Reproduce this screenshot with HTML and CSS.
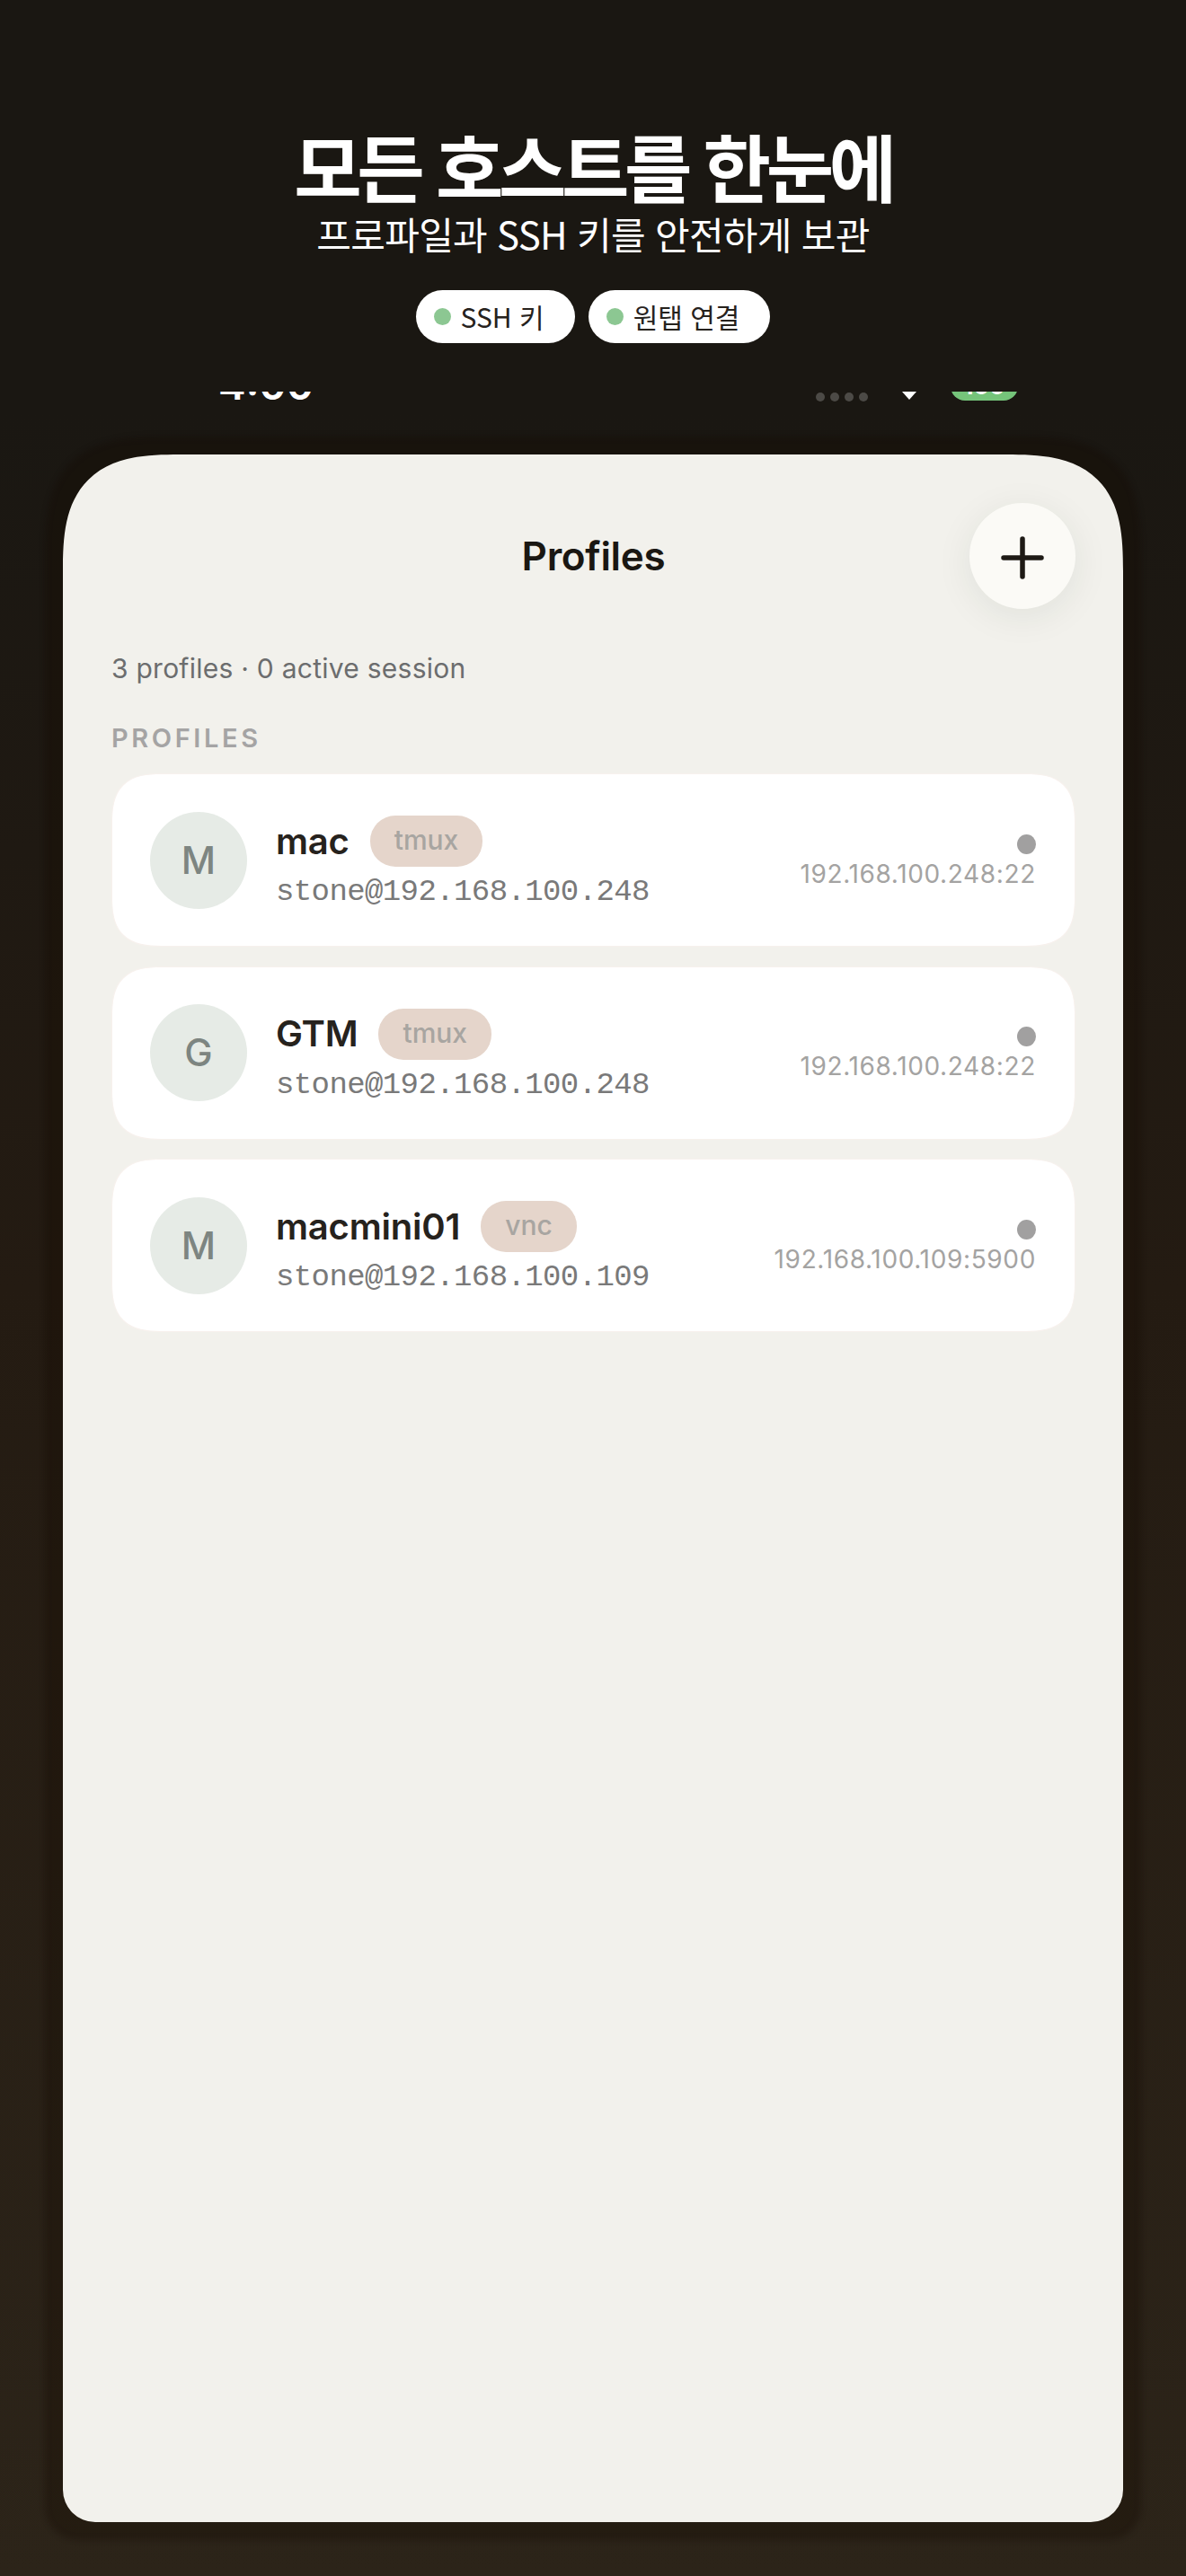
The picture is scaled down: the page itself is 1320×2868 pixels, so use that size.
FILE: index.html
```html
<!DOCTYPE html>
<html lang="ko">
<head>
<meta charset="utf-8">
<title>Profiles</title>
<link rel="stylesheet" href="styles.css">
</head>
<body>
<div class="stage">
  <header class="hero">
    <h1 class="hero-title">모든 호스트를 한눈에</h1>
    <p class="hero-sub">프로파일과 SSH 키를 안전하게 보관</p>
    <div class="chips">
      <span class="chip"><i class="chip-dot"></i>SSH 키</span>
      <span class="chip"><i class="chip-dot"></i>원탭 연결</span>
    </div>
  </header>
  <div class="status">
    <span class="time">4:00</span>
    <div class="status-right">
      <span class="signal"><i></i><i></i><i></i><i></i></span>
      <svg class="wifi" width="16" height="9" viewBox="0 0 16 9"><path d="M0 0H16L8 9Z" fill="#fff"/></svg>
      <span class="battery">100</span>
    </div>
  </div>
  <main class="screen">
    <div class="topbar">
      <h2 class="topbar-title">Profiles</h2>
      <button class="add" aria-label="Add">
        <svg class="add-icon" width="48" height="48" viewBox="0 0 48 48"><path d="M24 3V45M3 24H45" fill="none" stroke="#1e1a15" stroke-width="5.5" stroke-linecap="round"/></svg>
      </button>
    </div>
    <p class="summary">3 profiles · 0 active session</p>
    <div class="section">PROFILES</div>
    <div class="list">
      <article class="card">
        <div class="avatar">M</div>
        <div class="info">
          <div class="name-row"><span class="name">mac</span><span class="tag">tmux</span></div>
          <div class="addr">stone@192.168.100.248</div>
        </div>
        <div class="meta"><i class="dot"></i><span class="endpoint">192.168.100.248:22</span></div>
      </article>
      <article class="card">
        <div class="avatar">G</div>
        <div class="info">
          <div class="name-row"><span class="name">GTM</span><span class="tag">tmux</span></div>
          <div class="addr">stone@192.168.100.248</div>
        </div>
        <div class="meta"><i class="dot"></i><span class="endpoint">192.168.100.248:22</span></div>
      </article>
      <article class="card">
        <div class="avatar">M</div>
        <div class="info">
          <div class="name-row"><span class="name">macmini01</span><span class="tag">vnc</span></div>
          <div class="addr">stone@192.168.100.109</div>
        </div>
        <div class="meta"><i class="dot"></i><span class="endpoint">192.168.100.109:5900</span></div>
      </article>
    </div>
  </main>
</div>
</body>
</html>
```
FILE: styles.css
```css
* { box-sizing: border-box; }
html, body { margin: 0; padding: 0; }
body {
  width: 1320px;
  height: 2868px;
  overflow: hidden;
  background: linear-gradient(180deg, #1a1712 0%, #1a1712 16%, #241b12 50%, #2c2419 100%);
  font-family: Inter, "Noto Sans CJK KR", sans-serif;
}
.stage { display: flex; flex-direction: column; align-items: stretch; height: 2868px; }
.hero { height: 436px; padding-top: 138px; display: flex; flex-direction: column; align-items: center; flex: none; }
.hero-title {
  margin: 0;
  font: 700 82px/92px "Noto Sans CJK KR", sans-serif;
  letter-spacing: -5.4px;
  color: #fff;
}
.hero-sub {
  margin: 0;
  font: 400 42px/60px "Noto Sans CJK KR", sans-serif;
  letter-spacing: -0.7px;
  color: #fff;
}
.chips { display: flex; gap: 15px; margin-top: 33px; }
.chip {
  height: 59px;
  padding: 0 34px 0 20px;
  display: flex;
  align-items: center;
  gap: 11px;
  background: #fff;
  border-radius: 30px;
  font: 400 30px/59px "Noto Sans CJK KR", sans-serif;
  color: #26221d;
}
.chip-dot { width: 19px; height: 19px; border-radius: 50%; background: #8cc792; }
.status {
  height: 70px;
  flex: none;
  display: flex;
  justify-content: space-between;
  padding: 0 187px 0 243px;
  overflow: hidden;
}
.time { font: 600 46px/46px Inter, sans-serif; color: #fff; margin-top: -31px; height: 46px; }
.status-right { display: flex; gap: 38px; align-items: flex-start; }
.signal { display: flex; gap: 6px; margin-top: 1px; }
.signal i { width: 10px; height: 10px; background: #4c4a46; border-radius: 50%; }
.battery {
  width: 75px;
  height: 36px;
  margin-top: -26px;
  background: #75c47a;
  border-radius: 16px;
  color: #fff;
  font: 700 26px/36px Inter, sans-serif;
  text-align: center;
  padding-top: 2px;
}
.screen {
  width: 1180px;
  height: 2302px;
  flex: none;
  margin-left: 70px;
  background: #f2f1ec;
  border-radius: 104px 104px 36px 36px;
  box-shadow: 0 0 6px 20px rgba(20, 10, 0, 0.3);
  padding: 54px 53px 0 54px;
  display: flex;
  flex-direction: column;
}
.topbar { height: 118px; display: flex; align-items: center; justify-content: center; position: relative; flex: none; }
.topbar-title { margin: 0; font: 600 44px/52px Inter, sans-serif; letter-spacing: -0.3px; color: #1a1712; }
.add {
  position: absolute;
  right: 0;
  top: 0;
  width: 118px;
  height: 118px;
  padding: 0;
  border: 0;
  border-radius: 50%;
  background: #fbfaf6;
  display: flex;
  align-items: center;
  justify-content: center;
  box-shadow: 0 8px 40px rgba(30, 50, 40, 0.08);
}
.add-icon { margin-top: 3px; }
.summary { margin: 46px 0 0; font: 400 30px/40px Inter, sans-serif; letter-spacing: 0.25px; color: #6c6d6e; }
.section { margin-top: 40px; font: 600 29px/36px Inter, sans-serif; letter-spacing: 3.6px; color: #a5a4a4; }
.list { margin-top: 21px; display: flex; flex-direction: column; gap: 21.5px; }
.card {
  height: 193px;
  background: #fff;
  border: 1px solid #f7f1ed;
  border-radius: 46px;
  padding: 0 43px 0 42px;
  display: flex;
  align-items: center;
}
@supports (corner-shape: squircle) {
  .screen {
    border-radius: 130px 130px 36px 36px;
    corner-top-left-shape: superellipse(1.5);
    corner-top-right-shape: superellipse(1.5);
  }
  .card { border-radius: 58px; corner-shape: superellipse(1.5); }
}
.avatar {
  width: 108px;
  height: 108px;
  flex: none;
  border-radius: 50%;
  background: #e6ebe6;
  color: #7d8581;
  font: 500 42px/108px Inter, sans-serif;
  text-align: center;
}
.info { margin-left: 32px; flex: 1; min-width: 0; padding-top: 8px; }
.name-row { display: flex; align-items: center; gap: 23px; height: 57px; }
.name { font: 600 40px/48px Inter, sans-serif; color: #26221d; letter-spacing: -0.2px; }
.tag {
  height: 57px;
  padding: 0 27px;
  border-radius: 28px;
  background: #e5d5cb;
  color: #a8a5a1;
  font: 500 30px/55px Inter, sans-serif;
}
.addr { margin-top: 6px; font: 400 34px/44px "Liberation Mono", monospace; letter-spacing: -0.6px; color: #797979; }
.meta { display: flex; flex-direction: column; align-items: flex-end; gap: 4px; flex: none; padding-top: 4px; }
.dot { width: 21px; height: 22px; border-radius: 50%; background: #a1a0a0; }
.endpoint { font: 400 28px/36px Inter, sans-serif; color: #a4a3a2; letter-spacing: 0.65px; }
```
